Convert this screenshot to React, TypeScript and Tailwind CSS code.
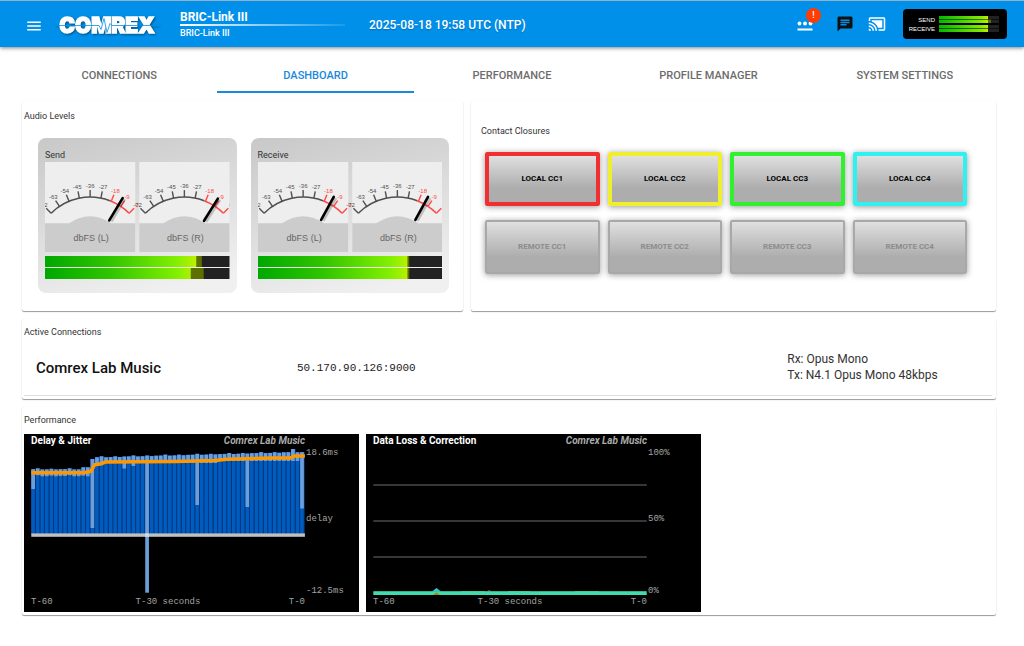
import { useId, useState } from "react";
import type { ReactNode } from "react";
import { MdCastConnected, MdChat, MdMenu } from "react-icons/md";

const TABS = ["Connections", "Dashboard", "Performance", "Profile Manager", "System Settings"];

const CLOSURES = [
  { label: "Local CC1", border: "border-[#f03030]" },
  { label: "Local CC2", border: "border-[#f0ee30]" },
  { label: "Local CC3", border: "border-[#30f030]" },
  { label: "Local CC4", border: "border-[#30f0f0]" },
];

const REMOTES = ["Remote CC1", "Remote CC2", "Remote CC3", "Remote CC4"];

const SCALE = ["-72", "-63", "-54", "-45", "-36", "-27", "-18", "-9", "0"];

function polar(cx: number, radius: number, degrees: number) {
  const a = (degrees * Math.PI) / 180;
  return { x: cx + radius * Math.sin(a), y: 90 - radius * Math.cos(a) };
}

function Dial({ cx, angle }: { cx: number; angle: number }) {
  const start = polar(cx, 55, -45);
  const split = polar(cx, 55, 21);
  const end = polar(cx, 55, 45);
  const tip = polar(cx, 63, angle);
  const base = polar(cx, 37, angle);
  return (
    <g>
      <path d={`M${start.x} ${start.y}A55 55 0 0 1 ${split.x} ${split.y}`} fill="none" stroke="#505050" strokeWidth="1.6" />
      <path d={`M${split.x} ${split.y}A55 55 0 0 1 ${end.x} ${end.y}`} fill="none" stroke="#ff4848" strokeWidth="1.6" />
      {SCALE.map((label, i) => {
        const deg = -45 + i * 11.25;
        const a = polar(cx, 55, deg);
        const b = polar(cx, 62, deg);
        const t = polar(cx, 66, deg);
        const color = i > 5 ? "#ff4848" : "#505050";
        return (
          <g key={label}>
            <line x1={a.x} y1={a.y} x2={b.x} y2={b.y} stroke={color} strokeWidth="1.4" />
            <text x={t.x} y={t.y + 2} textAnchor="middle" fill={color} className="text-[6px]">
              {label}
            </text>
          </g>
        );
      })}
      <line x1={base.x + 2} y1={base.y + 1} x2={tip.x + 2} y2={tip.y + 1} stroke="#000" strokeOpacity="0.2" strokeWidth="3" />
      <line x1={base.x} y1={base.y} x2={tip.x} y2={tip.y} stroke="#000" strokeWidth="2.6" strokeLinecap="round" />
    </g>
  );
}

function Dials({ left, right }: { left: number; right: number }) {
  return (
    <svg viewBox="0 0 184 90" className="block w-full font-['Liberation_Sans',sans-serif]">
      {[0, 94].map((x) => (
        <g key={x}>
          <rect x={x} width="90" height="90" fill="#eee" />
          <path d={`M${x} 61h24q21 -14 42 0h24v29h-90z`} fill="#ccc" />
        </g>
      ))}
      <Dial cx={45} angle={left} />
      <Dial cx={139} angle={right} />
      <text x="46" y="79" textAnchor="middle" fill="#666" className="text-[9px]">dbFS (L)</text>
      <text x="140" y="79" textAnchor="middle" fill="#666" className="text-[9px]">dbFS (R)</text>
    </svg>
  );
}

function Level({ value, peak }: { value: number; peak: number }) {
  const id = useId();
  return (
    <svg viewBox="0 0 100 10" preserveAspectRatio="none" className="block h-[11px] w-full">
      <linearGradient id={id} gradientUnits="userSpaceOnUse" x1="0" y1="0" x2="100" y2="0">
        <stop offset="0" stopColor="#00a800" />
        <stop offset="0.35" stopColor="#30c400" />
        <stop offset="0.72" stopColor="#84f000" />
        <stop offset="0.84" stopColor="#c8f000" />
      </linearGradient>
      <rect width="100" height="10" fill="#222" />
      <rect width={peak} height="10" fill="#5c7000" />
      <rect width={value} height="10" fill={`url(#${id})`} />
    </svg>
  );
}

function Meter({ title, dials, levels }: { title: string; dials: number[]; levels: number[][] }) {
  return (
    <section className="rounded-lg bg-linear-165 from-[#c8c8c8] to-[#f0f0f0] to-90% px-[7px] pt-[11px] pb-3.5">
      <h3 className="text-[9px] leading-[13px] text-[#333]">{title}</h3>
      <Dials left={dials[0]} right={dials[1]} />
      <div className="mt-1 flex flex-col gap-px">
        {levels.map((l, i) => (
          <Level key={i} value={l[0]} peak={l[1]} />
        ))}
      </div>
    </section>
  );
}

function Card({ title, className, children }: { title: string; className: string; children: ReactNode }) {
  return (
    <section className={`rounded-xs bg-white shadow-[0_1px_1px_rgba(0,0,0,0.4),0_0_1px_rgba(0,0,0,0.08)] ${className}`}>
      <h2 className="text-[9px] leading-3 text-[#333]">{title}</h2>
      {children}
    </section>
  );
}

const STEP = 4.557;
const LEFT = 7.3;

const JITTER = Array.from({ length: 60 }, (_, i) => {
  const wobble = [0, -0.8, 0.3, 0.2, -0.4, 0.3, 0][i % 7];
  let top = i < 11 ? 35.2 + wobble : 33.3;
  let bottom = i < 13 ? 42 + wobble : 29;
  if (i > 12) top = 23.4 - (i - 13) * 0.12 + wobble;
  if (i === 13) top = 25;
  if (i > 40) bottom = 27;
  if (i === 57) top = 15;
  const spikes: Record<number, number> = { 0: 55, 13: 94, 20: 34.5, 22: 32, 25: 158.7, 36: 71, 47: 73, 59: 74.5 };
  return { top, bottom: spikes[i] ?? bottom };
});

function ChartFrame({ title, labels, children }: { title: string; labels: { y: number; text: string }[]; children: ReactNode }) {
  return (
    <svg viewBox="0 0 335 178" role="img" aria-label={title} className="block w-[335px] bg-black font-['Liberation_Mono',monospace] text-[9px]">
      {children}
      <text x="7" y="10" fill="#fff" className="font-['Roboto',sans-serif] text-[10px] font-bold">{title}</text>
      <text x="281" y="10" textAnchor="end" fill="#aaa" className="font-['Roboto',sans-serif] text-[10px] font-bold italic">Comrex Lab Music</text>
      {labels.map((l) => (
        <text key={l.text} x="282" y={l.y} fill="#a4a4a4">{l.text}</text>
      ))}
      <text x="7" y="170" fill="#a4a4a4">T-60</text>
      <text x="144" y="170" textAnchor="middle" fill="#a4a4a4">T-30 seconds</text>
      <text x="281" y="170" textAnchor="end" fill="#a4a4a4">T-0</text>
    </svg>
  );
}

function DelayChart() {
  return (
    <ChartFrame title="Delay & Jitter" labels={[{ y: 21, text: "18.6ms" }, { y: 87, text: "delay" }, { y: 159, text: "-12.5ms" }]}>
      {JITTER.map((b, i) => {
        const x = LEFT + i * STEP;
        return (
          <g key={i}>
            <rect x={x} y={b.top} width={STEP} height={101 - b.top} fill="#003a7c" />
            <rect x={x} y={b.top} width="3.5" height={101 - b.top} fill="#005cc0" />
            <rect x={x} y={b.top} width="3.7" height={b.bottom - b.top} fill="#6c9edb" />
          </g>
        );
      })}
      <rect x="7.3" y="99.4" width="273.6" height="3.4" fill="#c0c0c0" />
      <rect x="121.2" y="99.4" width="3.7" height="3.4" fill="#c8dcf4" />
      <path
        d="M7.3 38.7H60l7-1.5 3.5-6.3 7-1.2 4-1.7 70-.6 40-1 11-1.1 45-1.2h19l3.5-2h10.9"
        fill="none"
        stroke="#ff9800"
        strokeWidth="3.5"
      />
    </ChartFrame>
  );
}

function LossChart() {
  return (
    <ChartFrame title="Data Loss & Correction" labels={[{ y: 21, text: "100%" }, { y: 87, text: "50%" }, { y: 159, text: "0%" }]}>
      <path d="M7.3 51h273.4M7.3 87h273.4M7.3 123h273.4" stroke="#4a4a4a" strokeWidth="1.7" />
      <path d="M95 157.6h24M142 157.6h22M209 157.6h24" stroke="#5a8a30" strokeWidth="1.2" />
      <path d="M66 157.5l4.5-3.5 4.5 3.5z" fill="#30c8d0" />
      <path d="M121 157.5q2-2.5 4.5 0z" fill="#f04020" />
      <rect x="7.3" y="157.2" width="273.4" height="3.8" fill="#40dcae" />
      <path d="M67 161l3.5-2.8 3.5 2.8z" fill="#a09000" />
    </ChartFrame>
  );
}

function Logo() {
  return (
    <svg viewBox="0 0 104 22" role="img" aria-label="Comrex" className="block w-[104px] drop-shadow-[1px_1px_1px_rgba(0,0,0,0.45)]">
      <text x="52" y="18" textAnchor="middle" fill="#fff" stroke="#fff" strokeWidth="1.3" className="font-['Inter',sans-serif] text-[21px] font-black">COMREX</text>
      <path d="M0 10.5h44l2 4 3-11 3 14 3-9 2 2h47" fill="none" stroke="#0090ea" strokeWidth="0.8" />
    </svg>
  );
}

function MiniLevel({ label, value, peak }: { label: string; value: number; peak: number }) {
  return (
    <div className="flex items-center gap-1">
      <span className="w-7 text-right font-['Liberation_Sans',sans-serif] text-[6px] leading-none text-white">{label}</span>
      <svg viewBox="0 0 60 7" className="block w-[60px]">
        <linearGradient id={`mini-${label}`} gradientUnits="userSpaceOnUse" x1="0" y1="0" x2="60" y2="0">
          <stop offset="0" stopColor="#00b800" />
          <stop offset="0.7" stopColor="#84e800" />
          <stop offset="0.84" stopColor="#c8f000" />
        </linearGradient>
        <rect width="60" height="7" fill="#222" />
        <rect y="3" width={peak} height="4" fill="#5c7000" />
        <rect width={value} height="7" fill={`url(#mini-${label})`} />
        <rect y="3" width="60" height="1" fill="#000" fillOpacity="0.55" />
      </svg>
    </div>
  );
}

function Header() {
  return (
    <header className="flex h-[47px] items-center border-t border-[#8fb4cc] bg-[#0090ea] pr-[17px] pl-[25px] text-white shadow-[0_1px_4px_rgba(0,0,0,0.5)]">
      <button type="button" aria-label="Menu" className="mt-1">
        <MdMenu className="size-[18px]" />
      </button>
      <div className="ml-3 pt-1">
        <Logo />
      </div>
      <div className="ml-[21px] w-[165px] pt-0.5">
        <h1 className="text-[12px] leading-[14px] font-bold">BRIC-Link III</h1>
        <div className="h-0.5 bg-linear-to-r from-white to-white/10" />
        <p className="text-[9px] leading-[14px] font-medium">BRIC-Link III</p>
      </div>
      <time className="ml-6 pt-0.5 text-[12px] font-medium text-shadow-sm">2025-08-18 19:58 UTC (NTP)</time>
      <div className="ml-auto flex items-center">
        <button type="button" aria-label="Alerts" className="relative mt-1">
          <svg viewBox="0 0 16 10" className="block w-4" fill="#fff">
            <circle cx="2.5" cy="2.5" r="1.9" />
            <circle cx="8" cy="2.5" r="1.9" />
            <circle cx="13.5" cy="2.5" r="1.9" />
            <rect x="0.5" y="7.5" width="15" height="2" />
          </svg>
          <span className="absolute -top-[13px] left-[9px] flex size-[15px] items-center justify-center rounded-full bg-[#ff3d00] text-[9px] font-medium">!</span>
        </button>
        <button type="button" aria-label="Messages" className="ml-[23px]">
          <MdChat className="size-[18px] text-[#111]" />
        </button>
        <button type="button" aria-label="Cast" className="ml-3.5">
          <MdCastConnected className="size-[18px]" />
        </button>
        <div className="ml-[17px] flex h-[30px] w-[104px] flex-col justify-center gap-0.5 rounded-sm bg-black pl-1">
          <MiniLevel label="SEND" value={49} peak={52} />
          <MiniLevel label="RECEIVE" value={49} peak={49} />
        </div>
      </div>
    </header>
  );
}

export default function App() {
  const [tab, setTab] = useState("Dashboard");
  return (
    <div className="bg-white font-['Roboto',sans-serif]">
      <Header />
      <nav role="tablist" className="mt-3 mr-[21px] ml-[21px] grid grid-cols-5">
        {TABS.map((t) => (
          <button
            key={t}
            type="button"
            role="tab"
            aria-selected={t === tab}
            onClick={() => setTab(t)}
            className={`h-[34px] border-b-2 pt-0.5 text-[11px] font-medium uppercase ${t === tab ? "border-[#1a88dc] text-[#1a88dc]" : "border-transparent text-[#6c6c6c]"}`}
          >
            {t}
          </button>
        ))}
      </nav>
      <main className="mt-2 mr-7 ml-[22px] flex flex-col gap-2 pb-8">
        <div className="grid grid-cols-[21fr_25fr] gap-2">
          <Card title="Audio Levels" className="h-[210px] pt-[9px] pl-0.5">
            <div className="mt-4 mr-3.5 ml-3.5 grid grid-cols-2 gap-3.5">
              <Meter title="Send" dials={[31, 32]} levels={[[82, 85], [79, 86]]} />
              <Meter title="Receive" dials={[29, 29]} levels={[[81, 82], [81, 82]]} />
            </div>
          </Card>
          <Card title="Contact Closures" className="pt-6 pl-2.5">
            <div className="mt-[15px] mr-[29px] ml-1 grid grid-cols-4 gap-x-2 gap-y-3.5">
              {CLOSURES.map((c) => (
                <button
                  key={c.label}
                  type="button"
                  className={`h-[54px] rounded-xs border-4 bg-linear-to-b from-[#e0e0e0] to-[#adadad] to-70% text-[8px] font-bold text-black uppercase shadow-[0_1px_6px_rgba(0,0,0,0.4)] ${c.border}`}
                >
                  {c.label}
                </button>
              ))}
              {REMOTES.map((label) => (
                <button
                  key={label}
                  type="button"
                  disabled
                  className="h-[54px] rounded-xs border-2 border-[#a8a8a8] bg-linear-to-b from-[#e0e0e0] to-[#adadad] to-70% text-[8px] font-bold text-[#8c8c8c] uppercase shadow-[0_1px_6px_rgba(0,0,0,0.4)]"
                >
                  {label}
                </button>
              ))}
            </div>
          </Card>
        </div>
        <Card title="Active Connections" className="px-0.5 pt-[7px] pb-[3px]">
          <div className="mt-2 mr-0.5 grid h-[50px] grid-cols-[274fr_515fr_215fr] items-center border-b border-[#e0e0e0] pb-1 pl-3">
            <strong className="text-[15px] font-medium text-[#111]">Comrex Lab Music</strong>
            <span className="font-['Liberation_Mono',monospace] text-[11px] text-[#222]">50.170.90.126:9000</span>
            <div className="pb-1 text-[12px] leading-4 text-[#333]">
              <p>Rx: Opus Mono</p>
              <p>Tx: N4.1 Opus Mono 48kbps</p>
            </div>
          </div>
        </Card>
        <Card title="Performance" className="px-0.5 pt-[7px] pb-[3px]">
          <div className="mt-2 flex gap-[7px]">
            <DelayChart />
            <LossChart />
          </div>
        </Card>
      </main>
    </div>
  );
}
